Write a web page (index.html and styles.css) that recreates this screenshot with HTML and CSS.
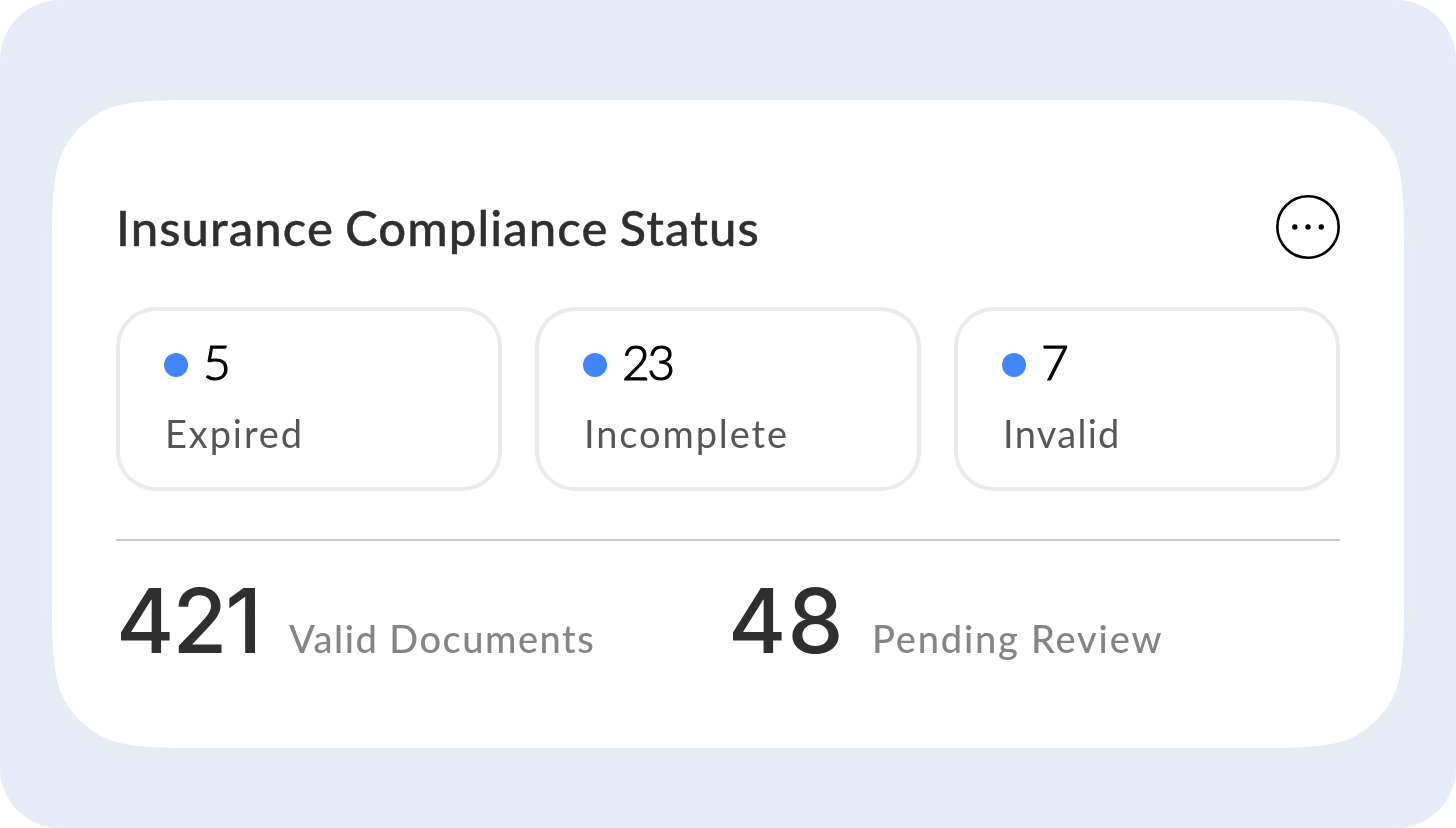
FILE: index.html
```html
<!DOCTYPE html>
<html lang="en">
<head>
    <meta charset="UTF-8">
    <meta name="viewport" content="width=device-width, initial-scale=1.0">
    <title>Insurance Compliance Status</title>
    <link rel="stylesheet" href="styles.css">
</head>
<body>
    <main class="page">
        <div class="shadow">
            <section class="card">
                <header class="header">
                    <h1>Insurance Compliance Status</h1>
                    <button type="button" class="more" aria-label="More options">
                        <svg width="64" height="64" viewBox="0 0 64 64">
                            <circle cx="32" cy="32" r="30.7" fill="none" stroke="#000" stroke-width="2.6"/>
                            <circle cx="18.8" cy="32" r="2.7"/>
                            <circle cx="32" cy="32" r="2.7"/>
                            <circle cx="45.3" cy="32" r="2.7"/>
                        </svg>
                    </button>
                </header>

                <div class="tiles">
                    <article class="tile">
                        <div class="count"><span class="dot"></span><span class="num">5</span></div>
                        <p class="expired">Expired</p>
                    </article>
                    <article class="tile">
                        <div class="count"><span class="dot"></span><span class="num">23</span></div>
                        <p class="incomplete">Incomplete</p>
                    </article>
                    <article class="tile">
                        <div class="count"><span class="dot"></span><span class="num">7</span></div>
                        <p class="invalid">Invalid</p>
                    </article>
                </div>

                <footer class="totals">
                    <div class="total">
                        <strong class="valid-num">421</strong>
                        <span class="valid-label">Valid Documents</span>
                    </div>
                    <div class="total">
                        <strong class="pending-num">48</strong>
                        <span class="pending-label">Pending Review</span>
                    </div>
                </footer>
            </section>
        </div>
    </main>
</body>
</html>
```
FILE: styles.css
```css
* {
    box-sizing: border-box;
    margin: 0;
    padding: 0;
}

body {
    font-family: Lato, sans-serif;
    background-color: #fff;
}

.page {
    width: 1456px;
    height: 828px;
    padding: 100px 52px 80px;
    background-color: #e6edf8;
    border-radius: 60px;
    overflow: hidden;
}

.shadow {
    filter: drop-shadow(0 0 16px rgba(222, 234, 232, 0.4));
}

.card {
    height: 648px;
    padding: 95px 64px 0;
    background-color: #fff;
    clip-path: path("M0 140C0 96 2 70 10 53C18 35 35 18 53 10C70 2 96 0 140 0H1212C1256 0 1282 2 1299 10C1317 18 1334 35 1342 53C1350 70 1352 96 1352 140V508C1352 552 1350 578 1342 595C1334 613 1317 630 1299 638C1282 646 1256 648 1212 648H140C96 648 70 646 53 638C35 630 18 613 10 595C2 578 0 552 0 508Z");
}

.header {
    display: flex;
    justify-content: space-between;
    align-items: center;
    height: 64px;
}

.header h1 {
    font-size: 49px;
    font-weight: 500;
    line-height: 64px;
    letter-spacing: 1.1px;
    word-spacing: -2.5px;
    color: #2f2f2f;
    -webkit-text-stroke: 0.4px #2f2f2f;
}

.more {
    width: 64px;
    height: 64px;
    background: none;
    border: none;
}

.more svg {
    display: block;
}

.tiles {
    display: grid;
    grid-template-columns: repeat(3, 1fr);
    gap: 33px;
    margin-top: 48px;
}

.tile {
    height: 184px;
    padding: 26px 44px 0;
    border: 4px solid #ebebeb;
    border-radius: 40px;
}

.count {
    display: flex;
    align-items: center;
    gap: 15px;
    height: 56px;
}

.dot {
    width: 24px;
    height: 24px;
    background-color: #4285fd;
    border-radius: 50%;
}

.num {
    padding-bottom: 7px;
    font-size: 48px;
    font-weight: 300;
    line-height: 56px;
    letter-spacing: -2.5px;
    color: #000;
    -webkit-text-stroke: 1.2px #000;
}

.tile p {
    margin-top: 16px;
    padding-left: 1px;
    font-size: 38px;
    line-height: 48px;
    letter-spacing: 1.9px;
    color: #555658;
}

.tile .invalid {
    letter-spacing: 1.3px;
}

.totals {
    display: grid;
    grid-template-columns: 1fr 1fr;
    height: 130px;
    margin-top: 48px;
    padding-top: 26px;
    border-top: 2px solid #c8c8c8;
}

.total {
    display: flex;
    align-items: baseline;
}

.total strong {
    font-family: Inter, sans-serif;
    font-size: 89px;
    font-weight: 500;
    line-height: 108px;
    letter-spacing: -2px;
    color: #2f2f2f;
}

.total .valid-num {
    width: 173px;
}

.total .pending-num {
    width: 144px;
    letter-spacing: 1px;
}

.total span {
    font-size: 38px;
    font-weight: 500;
    letter-spacing: 1.5px;
    color: #858585;
}

.total .pending-label {
    letter-spacing: 1.8px;
}
```
